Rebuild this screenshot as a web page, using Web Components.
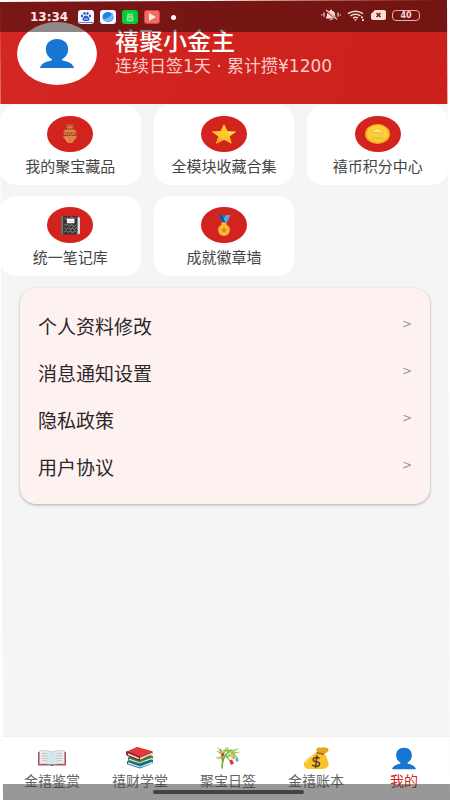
<!DOCTYPE html>
<html lang="zh-CN">
<head>
<meta charset="utf-8">
<meta name="viewport" content="width=device-width, initial-scale=1">
<title>我的</title>
<style>
html { background: #fff; }
body {
  margin: 0;
  font-family: "Noto Sans", "Noto Sans CJK SC", sans-serif;
  color: #333;
}
</style>
</head>
<body>
<profile-app></profile-app>

<script>
const ICONS = {
  user: `<svg viewBox="0 0 32 32"><g fill="#1876d2"><path d="M16 1C9.700 1 5.500 5.300 5.500 11.500c0 4.600 2.300 8.300 5.600 10.100v1.600C5 24.300 1 26.600 0 31h32c-1-4.400-5-6.700-11.100-7.800v-1.600c3.300-1.800 5.600-5.500 5.600-10.100C26.500 5.300 22.300 1 16 1z"/></g></svg>`,
  vase: `<svg viewBox="0 0 32 40"><path d="M9 5Q3 7 5 15M23 5q6 2 4 10" fill="none" stroke="#9c4f27" stroke-width="2"/><path d="M10 2h12l-1 8q10 3 9 12 0 6-6 11l-3 5H11l-3-5q-6-5-6-11-1-9 9-12z" fill="#e57f4a"/><ellipse cx="16" cy="3" rx="8" ry="2.500" fill="#b96038"/><path d="M10 9h12l1 2H9zM3 17h26l1 7H2z" fill="#8f4527"/><path d="M5 22v-3h4v3h4v-3h4v3h4v-3h4v3h2" fill="none" stroke="#ed9c58" stroke-width="1.500"/><path d="M8 29l3 5" fill="none" stroke="#ffab70" stroke-width="2"/></svg>`,
  star: `<svg viewBox="0 0 32 30"><path d="M16 0l4.300 10.400 11.200.9-8.500 7.300 2.700 11L16 23.700 6.300 29.600 9 18.600.5 11.300l11.200-.9z" fill="#fdc72e"/><path d="M16 2l3.400 9.500 10.600.8-8 3.700z" fill="#ffe34d"/><path d="M9 18.600L6.300 29.600 16 23.700z" fill="#f9a92a"/></svg>`,
  coin: `<svg viewBox="0 0 36 32"><ellipse cx="18" cy="16" rx="18" ry="16" fill="#f6ae20"/><ellipse cx="18" cy="15.500" rx="15.500" ry="13.500" fill="#ffd033"/><path d="M9 12l9-5 9 5v1.500H9zM11 15h2.500v7H11zM16.700 15h2.500v7h-2.500zM22.500 15H25v7h-2.500zM9 23h18v1.500H9z" fill="#fbe878" stroke="#dda524" stroke-width=".7"/></svg>`,
  notebook: `<svg viewBox="0 0 32 32"><path d="M26 3l6 1v26l-6 1z" fill="#ddd"/><path d="M2 2h26v29H2z" fill="#353434"/><path d="M2 2h3v29H2z" fill="#777"/><path d="M7 5l3 2 2-3 3 2 4-3 2 4 4-2M7 14l2 3 3-2 3 3 4-3 3 4 4-3M7 20l3 3 3-3 4 4 2-4 4 3 4-3M7 27l3-2 3 3 4-3 3 4 3-4 4 3" fill="none" stroke="#999" stroke-width="1.400"/><path d="M11 6h12v7H11z" fill="#fff"/><path d="M13 10h8" stroke="#aaa"/></svg>`,
  medal: `<svg viewBox="0 0 32 42"><path d="M3 0h11l9 15-6 4z" fill="#176fc1"/><path d="M19 0h10l-8 17-6 3-3-4z" fill="#4aaee9"/><path d="M5 0h5l10 16-3 3z" fill="#164f99"/><rect x="11" y="15" width="10" height="6" rx="2" fill="#fcc13c"/><circle cx="16" cy="30" r="12" fill="#fba928"/><circle cx="16" cy="30" r="9" fill="#ffc343"/><path d="M16 22l2.200 5.300 5.800.4-4.400 3.800 1.400 5.500-5-3-5 3 1.400-5.500L8 27.700l5.800-.4z" fill="#e78919"/></svg>`,
  book: `<svg viewBox="0 0 56 32"><path d="M0 4h5l2 23H49l2-23h5v27H32l-4 1-4-1H0z" fill="#c2494c"/><path d="M3 2Q18-1 28 4 38-1 53 2v26q-15-2-25 2Q18 26 3 28z" fill="#e9f1f4" stroke="#8ba7b4"/><path d="M28 4v26M24 4v24M32 4v24" stroke="#8cc5dc"/><path d="M7 7q8-2 14 1M7 12q8-2 14 1M7 17q8-2 14 1M7 22q8-2 14 1M35 8q6-3 14-1M35 13q6-3 14-1M35 18q6-3 14-1M35 23q6-3 14-1" fill="none" stroke="#a8a9ac" stroke-width="1.400"/><path d="M24 29h8l-4 3z" fill="#176c99"/></svg>`,
  books: `<svg viewBox="0 0 56 42"><path d="M2 27l25-8 27 6v6L28 41 2 33z" fill="#126d9e"/><path d="M4 29l24 8 25-9v3l-25 8L4 32z" fill="#e9f5fa"/><path d="M4 20l26-9 24 6v6l-28 10-22-7z" fill="#377b3d"/><path d="M6 22l21 7 26-9v3l-26 8-21-6z" fill="#d9e9b8"/><path d="M1 9L22 0l31 8v5L27 26 3 17Q-1 13 1 9z" fill="#bd2929"/><path d="M2 9L22 1l30 8-25 10z" fill="#e33b3d"/><path d="M4 12l23 9 25-10v3L27 25 4 16z" fill="#e7e1d9"/><path d="M2 9l25 10v6L3 16Q0 13 2 9z" fill="none" stroke="#7d2024" stroke-width="2"/></svg>`,
  tanabata: `<svg viewBox="0 0 48 44"><path d="M12 43Q12 14 32 6M13 28Q12 15 9 4" fill="none" stroke="#72a33b" stroke-width="3"/><g fill="#8fc449" stroke="#8fc449" stroke-width=".8"><path d="M13 16L1 8l11 3zM11 12L3 1l9 7zM12 15l8-14-4 15zM12 23L0 22l11-3zM24 10L22 0l6 8zM31 7L45 3 34 10zM27 11l20-1-15 5zM24 13l20 8-16-3zM22 16l7 13-11-11zM18 18l12-1-9 5zM24 9L12 8l11-4zM32 9l13 15-11-8z"/></g><path d="M11 13l5-2v7l-4 2zM26 27l6-2 4 8-6 3z" fill="#dc3934"/><path d="M38 23l5-1 2 6-4 2z" fill="#53abd6"/><path d="M5 19l4 1-1 5-4-1zM29 16l4-1 2 5-4 2z" fill="#f2c944"/><circle cx="35" cy="22" r="2" fill="#db6731"/></svg>`,
  money: `<svg viewBox="0 0 50 42"><path d="M27 11Q22 4 27 2q4-3 8 0 6-4 8 0 6-2 6 4-1 4-8 7z" fill="#e7a622"/><path d="M25 10l17 3q4 8 7 17 2 12-15 12H11Q-1 42 0 32q2-9 16-16z" fill="#f8c32d"/><path d="M25 11l15 3" stroke="#9c6325" stroke-width="3"/><path d="M18 17Q6 22 4 31" fill="none" stroke="#ffe368" stroke-width="2"/><path d="M31 22q-3-3-8-2-6 2-4 6 1 2 6 2 7 1 6 5-1 4-7 4-5 0-8-3M26 16l-3 24" fill="none" stroke="#5f3c20" stroke-width="3"/></svg>`,
  paw: `<svg viewBox="0 0 16 14"><rect width="16" height="14" rx="3" fill="#f4f7ff"/><g fill="#2957bd"><ellipse cx="4" cy="6" rx="1.100" ry="1.400"/><ellipse cx="6.500" cy="3.500" rx="1.100" ry="1.400"/><ellipse cx="9.500" cy="3.500" rx="1.100" ry="1.400"/><ellipse cx="12" cy="6" rx="1.100" ry="1.400"/><path d="M8 5.500c2 0 3.500 3 3.500 4 0 1.500-1.700 1.500-3.500 1.500s-3.500 0-3.500-1.500c0-1 1.500-4 3.500-4z"/></g><path d="M7 8v2M9 8v2" stroke="#fff" stroke-width=".8"/><path d="M1 12.500h14" stroke="#568ce0"/></svg>`,
  browser: `<svg viewBox="0 0 16 14"><rect width="16" height="14" rx="3" fill="#f4f7ff"/><ellipse cx="8" cy="7" rx="5.500" ry="5" fill="#2382df"/><path d="M3 9Q9 9 12.500 3 14 8 10.500 11 5.500 13 3 9z" fill="#75bdf0"/></svg>`,
  robot: `<svg viewBox="0 0 16 14"><rect width="16" height="14" rx="3" fill="#05c93a"/><path d="M5 6.500Q5 4 8 4t3 2.500zM5 7.200h6V11H5zM5.500 2.500l1 1.500M10.500 2.500l-1 1.500" fill="#82ee8f" stroke="#82ee8f" stroke-width=".7"/><path d="M6.700 5.500h.8M8.700 5.500h.8M7 8v2M9 8v2" stroke="#05a831" stroke-width=".8"/></svg>`,
  player: `<svg viewBox="0 0 16 14"><rect width="16" height="14" rx="3" fill="#db3f4b"/><rect x="1" y="1" width="14" height="12" rx="2" fill="#ef6e65"/><path d="M5 3l7 4-7 4z" fill="#ffe9df"/></svg>`,
  mute: `<svg viewBox="0 0 20 14"><path d="M5 10q1-1 1-4 0-3 3-4V1h2v1q3 1 3 4 0 3 1 4v1H5zM8 12h4q-2 2-4 0z" fill="#f4d9d5"/><path d="M4 1l13 12" stroke="#7d1511" stroke-width="2"/><path d="M5 1l11 11" stroke="#f4d9d5" stroke-width="1.200"/><path d="M3 4v5M17 4v5M.8 6v1.500M19.200 6v1.500" stroke="#f4d9d5" stroke-width="1.200"/></svg>`,
  wifi: `<svg viewBox="0 0 18 12"><path d="M1 4q7.500-5.500 15 0M3.500 6.500q5-3.500 10 0M6 9q2.500-2 5 0" fill="none" stroke="#f4d9d5" stroke-width="1.600"/><path d="M7 10h3l-1.500 2z" fill="#f4d9d5"/><path d="M14 7h2v2h-2zM15 10h2v2h-2z" fill="#f4d9d5"/></svg>`,
  nosim: `<svg viewBox="0 0 15 10"><path d="M4 0h9q2 0 2 2v6q0 2-2 2H2Q0 10 0 8V4z" fill="#f7e0dc"/><path d="M5.500 3l4 4M9.500 3l-4 4" stroke="#7d1511" stroke-width="1.600"/></svg>`
};

const sheet = (css, html) => {
  const t = document.createElement("template");
  t.innerHTML = `<style>*{box-sizing:border-box}${css}</style>${html}`;
  return t;
};

class BaseElement extends HTMLElement {
  connectedCallback() {
    if (this.shadowRoot) return;
    this.attachShadow({ mode: "open" }).append(this.constructor.template.content.cloneNode(true));
    this.ready();
  }
  ready() {}
}

/* Inline SVG picked by name; the box comes from --w and --h. */
class AppIcon extends BaseElement {
  static template = sheet(`
    :host { display: block; flex: none; width: var(--w, 24px); height: var(--h, 24px); }
    svg { display: block; width: 100%; height: 100%; }
  `, `<div part="box" style="height:100%"></div>`);
  ready() {
    const box = this.shadowRoot.querySelector("div");
    box.innerHTML = ICONS[this.getAttribute("name")] || "";
    const svg = box.firstElementChild;
    svg.setAttribute("preserveAspectRatio", "none");
    svg.setAttribute("aria-hidden", "true");
  }
}

/* Translucent system bar that lies over the page header. */
class StatusBar extends BaseElement {
  static template = sheet(`
    :host {
      display: flex; justify-content: space-between; align-items: center;
      height: 32px; padding: 0 30px; background: rgba(20, 8, 8, .48);
      color: #fff; font: bold 12px/16px "DejaVu Sans", sans-serif;
    }
    div { display: flex; align-items: center; gap: 6px; }
    .left { padding-top: 2px; }
    .left app-icon { --w: 16px; --h: 14px; }
    time { margin-right: 4px; color: #fae9e7; }
    i { width: 5px; height: 5px; margin-left: 5px; border-radius: 50%; background: #fff; }
    .right { padding-bottom: 2px; }
    .battery {
      width: 28px; height: 11px; border: 1px solid #dcb4b0; border-radius: 4px;
      font: bold 8px/9px "DejaVu Sans", sans-serif; text-align: center; color: #f4d9d5;
    }
  `, `
    <div class="left"><time>13:34</time><app-icon name="paw"></app-icon><app-icon name="browser"></app-icon><app-icon name="robot"></app-icon><app-icon name="player"></app-icon><i></i></div>
    <div class="right"><app-icon name="mute" style="--w:20px;--h:12px"></app-icon><app-icon name="wifi" style="--w:18px;--h:11px"></app-icon><app-icon name="nosim" style="--w:15px;--h:10px"></app-icon><span class="battery">40</span></div>
  `);
}

class ProfileHeader extends BaseElement {
  static template = sheet(`
    :host {
      display: flex; align-items: flex-start; gap: 18px;
      padding: 22px 17px 19px; color: #fff;
      font-family: "DejaVu Sans", "Noto Sans CJK SC", sans-serif;
      background: linear-gradient(100deg, #d42622, #cb201b);
    }
    .avatar {
      display: grid; place-items: center; flex: none;
      width: 80px; height: 63px; border-radius: 50%; background: #fff;
    }
    .avatar app-icon { --w: 34px; --h: 31px; }
    .text { padding-top: 6px; }
    h1 { margin: 0; font-size: 24px; line-height: 28px; font-weight: 500; }
    p { margin: 0; font-size: 17px; line-height: 20px; color: #f9cdc9; }
  `, `
    <div class="avatar"><app-icon name="user"></app-icon></div>
    <div class="text"><h1><slot name="name"></slot></h1><p><slot></slot></p></div>
  `);
}

class FeatureCard extends BaseElement {
  static template = sheet(`
    :host { display: block; }
    a {
      display: flex; flex-direction: column; align-items: center; gap: 4px;
      padding: 11px 0 9px; border-radius: 16px; background: #fff;
      color: #444; text-decoration: none; font-size: 15px; line-height: 20px; white-space: nowrap;
    }
    .disc {
      display: grid; place-items: center;
      width: 46px; height: 36px; border-radius: 50%; background: #d3231f;
    }
  `, `<a href="#"><span class="disc"><slot name="icon"></slot></span><span><slot></slot></span></a>`);
}

class FeatureGrid extends BaseElement {
  static template = sheet(`
    :host { display: grid; grid-template-columns: repeat(3, minmax(0, 1fr)); gap: 11px 13px; padding: 1px 2px 0 0; }
  `, `<slot></slot>`);
}

class SettingsPanel extends BaseElement {
  static template = sheet(`
    :host {
      display: block; margin: 12px 20px; padding: 15px 18px 13px;
      border-radius: 16px; background: #fef2f1;
      box-shadow: 0 1px 3px rgba(0, 0, 0, .3);
    }
  `, `<slot></slot>`);
}

class SettingsRow extends BaseElement {
  static template = sheet(`
    :host { display: block; }
    button {
      display: flex; justify-content: space-between; align-items: center;
      width: 100%; height: 47px; padding: 0; border: 0; background: none;
      font: inherit; font-size: 19px; line-height: 24px; color: #2b2728; text-align: left;
    }
    .arrow { padding-bottom: 6px; font-family: "DejaVu Sans", sans-serif; font-size: 12px; line-height: 20px; color: #999; }
  `, `<button type="button"><span><slot></slot></span><span class="arrow">&gt;</span></button>`);
}

class TabBar extends BaseElement {
  static template = sheet(`
    :host { display: block; margin-top: auto; background: #fff; border-top: 1px solid #f0f0f0; }
    nav { display: grid; grid-auto-flow: column; grid-auto-columns: minmax(0, 1fr); padding: 9px 2px 8px 8px; }
  `, `<nav><slot></slot></nav>`);
}

class TabItem extends BaseElement {
  static template = sheet(`
    :host { display: block; }
    a {
      display: flex; flex-direction: column; align-items: center;
      color: #666; text-decoration: none; font-size: 14px; line-height: 22px; white-space: nowrap;
    }
    :host([active]) a { color: #cf2723; }
    .icon { display: grid; place-items: center; height: 24px; }
  `, `<a href="#"><span class="icon"><slot name="icon"></slot></span><span><slot></slot></span></a>`);
}

/* Gesture strip with the home indicator, over the foot of the tab bar. */
class GestureBar extends BaseElement {
  static template = sheet(`
    :host { display: flex; justify-content: center; padding: 6px 0 0 7px; height: 16px; background: rgba(50, 50, 50, .5); }
    i { width: 34%; height: 4px; border-radius: 2px; background: #444; }
  `, `<i></i>`);
}

class ProfileApp extends BaseElement {
  static template = sheet(`
    :host {
      position: relative; display: flex; flex-direction: column;
      min-height: 100vh; background: #f5f5f5;
      clip-path: polygon(0 2px, calc(100% - 3px) 0, 100% 100%, 3px 100%);
    }
    status-bar { position: absolute; top: 0; left: 0; right: 0; }
    gesture-bar { position: absolute; bottom: 0; left: 0; right: 0; }
  `, `
    <profile-header><span slot="name">禧聚小金主</span>连续日签1天 · 累计攒¥1200</profile-header>
    <feature-grid>
      <feature-card><app-icon slot="icon" name="vase" style="--w:16px;--h:20px"></app-icon>我的聚宝藏品</feature-card>
      <feature-card><app-icon slot="icon" name="star" style="--w:26px;--h:20px"></app-icon>全模块收藏合集</feature-card>
      <feature-card><app-icon slot="icon" name="coin" style="--w:25px;--h:20px"></app-icon>禧币积分中心</feature-card>
      <feature-card><app-icon slot="icon" name="notebook" style="--w:20px;--h:20px"></app-icon>统一笔记库</feature-card>
      <feature-card><app-icon slot="icon" name="medal" style="--w:16px;--h:21px"></app-icon>成就徽章墙</feature-card>
    </feature-grid>
    <settings-panel>
      <settings-row>个人资料修改</settings-row>
      <settings-row>消息通知设置</settings-row>
      <settings-row>隐私政策</settings-row>
      <settings-row>用户协议</settings-row>
    </settings-panel>
    <tab-bar>
      <tab-item><app-icon slot="icon" name="book" style="--w:28px;--h:16px"></app-icon>金禧鉴赏</tab-item>
      <tab-item><app-icon slot="icon" name="books" style="--w:28px;--h:22px"></app-icon>禧财学堂</tab-item>
      <tab-item><app-icon slot="icon" name="tanabata" style="--w:24px;--h:22px"></app-icon>聚宝日签</tab-item>
      <tab-item><app-icon slot="icon" name="money" style="--w:25px;--h:22px"></app-icon>金禧账本</tab-item>
      <tab-item active><app-icon slot="icon" name="user" style="--w:24px;--h:23px"></app-icon>我的</tab-item>
    </tab-bar>
    <status-bar></status-bar>
    <gesture-bar></gesture-bar>
  `);
}

customElements.define("app-icon", AppIcon);
customElements.define("status-bar", StatusBar);
customElements.define("profile-header", ProfileHeader);
customElements.define("feature-card", FeatureCard);
customElements.define("feature-grid", FeatureGrid);
customElements.define("settings-panel", SettingsPanel);
customElements.define("settings-row", SettingsRow);
customElements.define("tab-bar", TabBar);
customElements.define("tab-item", TabItem);
customElements.define("gesture-bar", GestureBar);
customElements.define("profile-app", ProfileApp);
</script>
</body>
</html>
